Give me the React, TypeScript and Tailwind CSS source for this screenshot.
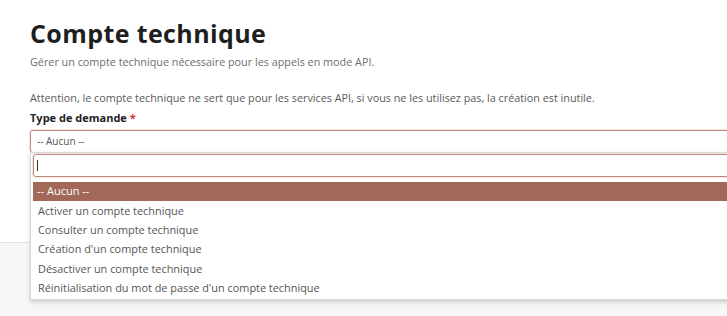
import React from "react";

const items = [
  "Activer un compte technique",
  "Consulter un compte technique",
  "Création d'un compte technique",
  "Désactiver un compte technique",
  "Réinitialisation du mot de passe d'un compte technique",
];

export default function App() {
  return (
    <div
      className="relative w-[727px] h-[316px] overflow-hidden bg-[#f6f6f6]"
      style={{ fontFamily: '"Open Sans", "Liberation Sans", sans-serif' }}
    >
      <div className="h-[243px] bg-white border-b border-[#e4e4e4] pl-[30px] pt-[17px]">
        <h1 className="text-[25px] leading-[32px] font-bold text-[#1e1e1e] tracking-[0.4px]">
          Compte technique
        </h1>
        <p className="mt-[5px] text-[10.8px] leading-[15px] text-[#6e6e6e]">
          Gérer un compte technique nécessaire pour les appels en mode API.
        </p>
        <p className="mt-[21px] text-[10.8px] leading-[15px] text-[#5a5a5a]">
          Attention, le compte technique ne sert que pour les services API, si vous ne les utilisez pas, la création est inutile.
        </p>
        <div className="mt-[5px] text-[11px] leading-[15px] font-bold text-[#1e1e1e]">
          Type de demande <span className="text-[#d0302a]">*</span>
        </div>
        <div className="mt-[5px] h-[23px] w-[760px] rounded-[3px] border border-[#c08a7e] shadow-[0_0_0_1px_#f1e3df] flex items-center pl-[6px] text-[10px] text-[#555]">
          -- Aucun --
        </div>
      </div>

      <div className="absolute left-[30px] top-[152px] w-[760px] h-[148px] bg-white border border-[#d9d9d9] shadow-[0_2px_4px_rgba(0,0,0,0.18)] pt-[1px] pl-[2px]">
        <div className="h-[23px] w-[740px] rounded-[3px] border border-[#c08a7e] shadow-[0_0_0_1px_#f1e3df] flex items-center pl-[3px]">
          <div className="w-[1px] h-[11px] bg-[#333]" />
        </div>
        <div className="mt-[5px] h-[19px] bg-[#a26959] text-white text-[11px] flex items-center pl-[4px]">
          -- Aucun --
        </div>
        {items.map((t) => (
          <div
            key={t}
            className="h-[19.4px] flex items-center pl-[5px] text-[10.9px] text-[#555]"
          >
            {t}
          </div>
        ))}
      </div>
    </div>
  );
}
